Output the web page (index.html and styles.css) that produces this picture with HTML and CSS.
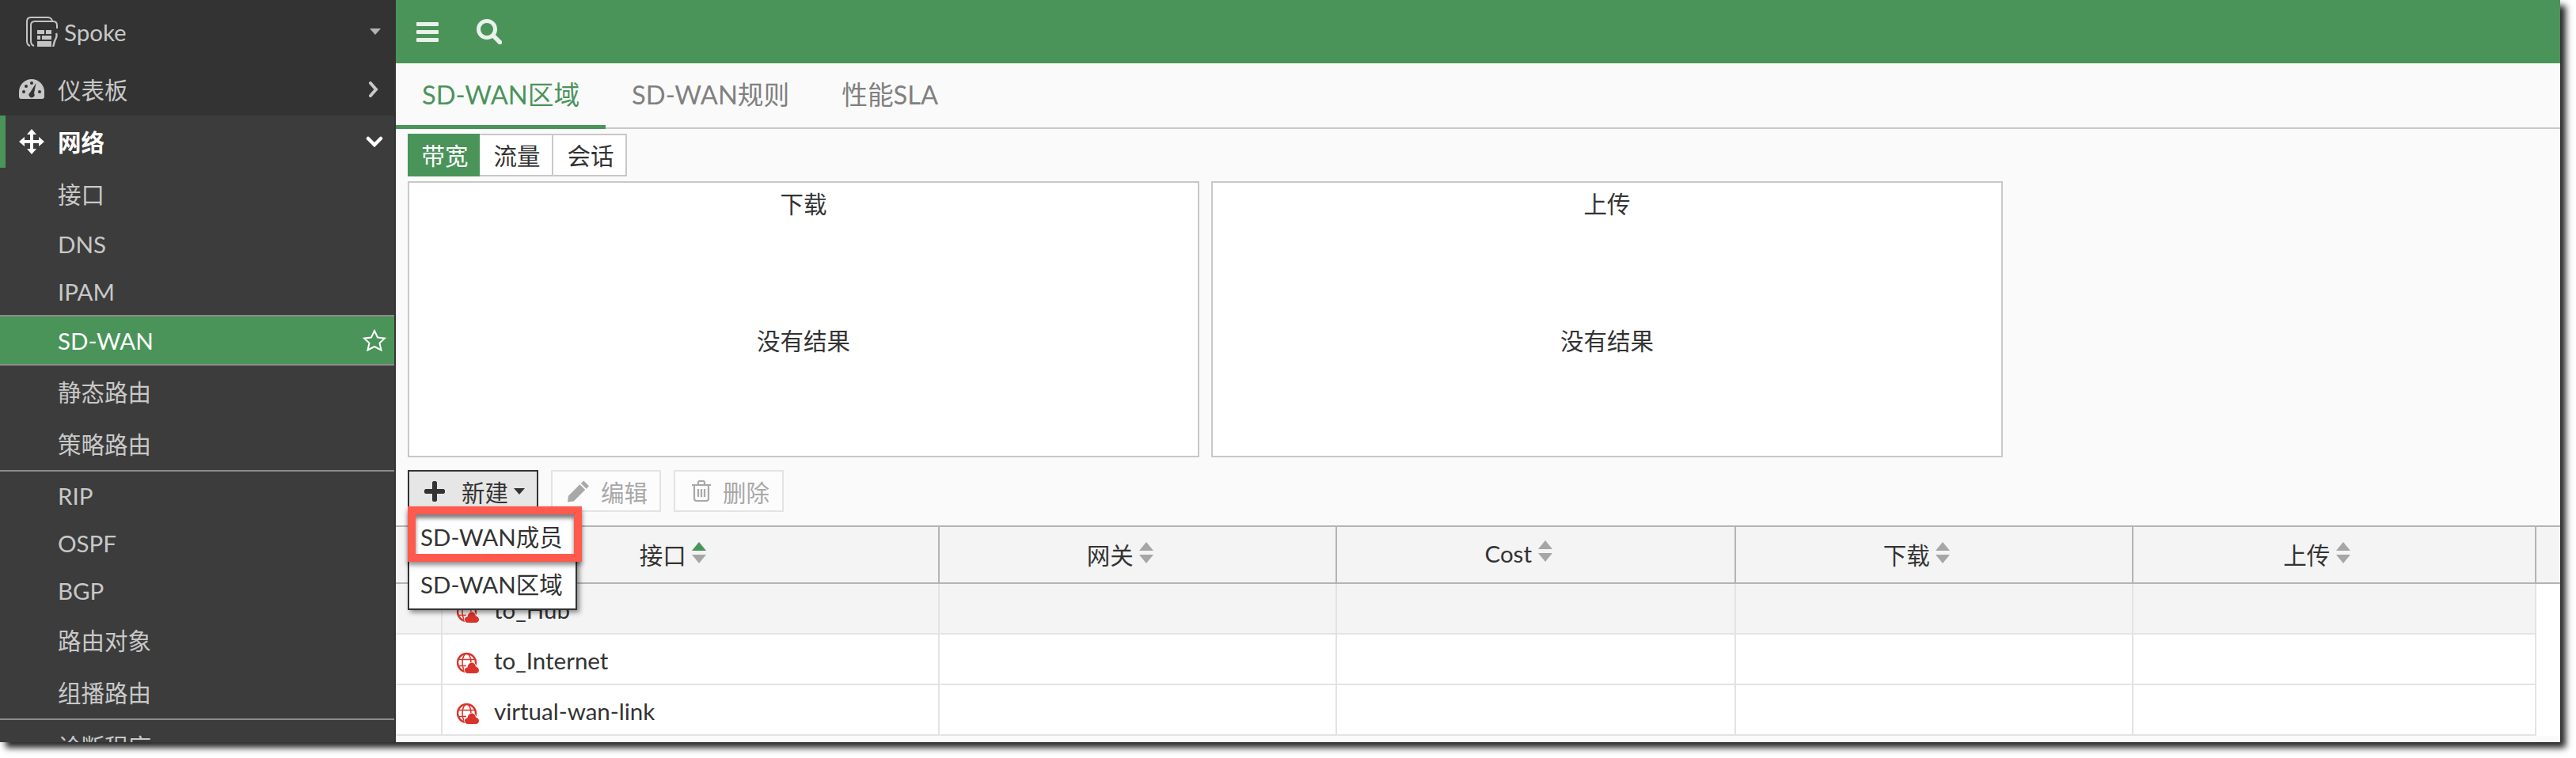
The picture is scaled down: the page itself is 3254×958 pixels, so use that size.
FILE: index.html
```html
<!DOCTYPE html>
<html lang="zh-CN">
  <head>
    <meta charset="UTF-8" />
    <title>SD-WAN</title>
    <link rel="stylesheet" href="styles.css">
  </head>
  <body>
    <svg class="sprites" width="0" height="0">
      <symbol id="sort-icon" viewBox="0 0 18 27">
        <path class="sort-up" d="M9 0 L18 11 H0 Z" />
        <path class="sort-down" d="M0 16 H18 L9 27 Z" />
      </symbol>
      <symbol id="wan-icon" viewBox="0 0 28 28">
        <circle cx="12.500" cy="13.500" r="11.500" fill="none" stroke="#d9342b" stroke-width="2.400" />
        <ellipse cx="12.500" cy="13.500" rx="5.500" ry="11.500" fill="none" stroke="#d9342b" stroke-width="1.500" />
        <path d="M2 9.500 H23 M2 17.500 H12" fill="none" stroke="#d9342b" stroke-width="1.500" />
        <path d="M14 27 C11.500 27 10 25 10 23 C10 21 11.500 19.500 13.500 19.500 C14 16 16 13.500 19 13.500 C22 13.500 23.500 16 24 18.500 C26.500 19 28 21 28 23 C28 25.500 26 27 24 27 Z" fill="#d9342b" stroke="#ffffff" stroke-width="1.500" paint-order="stroke" />
      </symbol>
    </svg>

    <div class="window">
      <nav class="sidebar">
        <div class="device">
          <svg class="device-logo" viewBox="0 0 40 38" fill="none" stroke="#c4c4c4" stroke-width="2">
            <path d="M5 37 C2 36 1 34 1 31 V6 C1 3 3 1 6 1 H27 C30 1 32 2 33 5" />
            <path d="M10 37 C7 36 6 34 6 31 V11 C6 8 8 6 11 6 H34 C37 6 39 8 39 11 V15" />
            <path d="M14 17 H23 V22 H14 Z M25 17 H32 V22 H25 Z M14 24 H18 V29 H14 Z M20 24 H32 V29 H20 Z M14 31 H32 V38 H14 Z" fill="#c4c4c4" stroke="none" />
            <path d="M38 21 C40 26 37 28 36 31 C35 34 35 36 34 38" stroke-width="2.400" />
          </svg>
          <span class="device-name">Spoke</span>
          <span class="caret caret-light"></span>
        </div>
        <a class="nav-top">
          <svg class="nav-icon" viewBox="0 0 32 26">
            <path fill="#c8c8c8" d="M16 0 A16 16 0 0 0 0 16 V22 C0 24 1 25 3 25 H29 C31 25 32 24 32 22 V16 A16 16 0 0 0 16 0 Z" />
            <g fill="#333">
              <circle cx="6" cy="16" r="2" />
              <circle cx="9" cy="9" r="2" />
              <circle cx="16" cy="5" r="2" />
              <circle cx="26" cy="16" r="2" />
              <path d="M21.500 5 L19 18 A3.500 3.500 0 1 1 14 17 Z" />
            </g>
          </svg>
          <span class="nav-label">仪表板</span>
          <svg class="nav-arrow" viewBox="0 0 13 20" fill="none" stroke="#c8c8c8" stroke-width="4" stroke-linecap="round">
            <path d="M3 2 L10 10 L3 18" />
          </svg>
        </a>
        <a class="nav-top nav-open">
          <svg class="nav-icon nav-icon-tall" viewBox="0 0 32 32" fill="#fff">
            <path d="M16 0 L22 7 H18 V14 H25 V10 L32 16 L25 22 V18 H18 V25 H22 L16 32 L10 25 H14 V18 H7 V22 L0 16 L7 10 V14 H14 V7 H10 Z" />
          </svg>
          <span class="nav-label">网络</span>
          <svg class="nav-arrow nav-arrow-down" viewBox="0 0 22 14" fill="none" stroke="#fff" stroke-width="4.500" stroke-linecap="round">
            <path d="M3 3 L11 11 L19 3" />
          </svg>
        </a>
        <a class="nav-sub nav-tall">接口</a>
        <a class="nav-sub">DNS</a>
        <a class="nav-sub">IPAM</a>
        <a class="nav-sub nav-current">
          SD-WAN
          <svg class="nav-star" viewBox="0 0 30 28" fill="none" stroke="#fff" stroke-width="2">
            <path d="M15 2 L19 10.500 L28 11.500 L21.500 17.500 L23.500 26.500 L15 22 L6.500 26.500 L8.500 17.500 L2 11.500 L11 10.500 Z" />
          </svg>
        </a>
        <a class="nav-sub nav-tall">静态路由</a>
        <a class="nav-sub nav-tall nav-last">策略路由</a>
        <a class="nav-sub">RIP</a>
        <a class="nav-sub">OSPF</a>
        <a class="nav-sub">BGP</a>
        <a class="nav-sub nav-tall">路由对象</a>
        <a class="nav-sub nav-tall nav-last">组播路由</a>
        <a class="nav-sub nav-tall">诊断程序</a>
      </nav>

      <main class="main">
        <header class="topbar">
          <svg class="menu-icon" viewBox="0 0 28 25" fill="#e9f1eb">
            <rect width="28" height="5" rx="1" />
            <rect y="10" width="28" height="5" rx="1" />
            <rect y="20" width="28" height="5" rx="1" />
          </svg>
          <svg class="search-icon" viewBox="0 0 32 32" fill="none" stroke="#e9f1eb">
            <circle cx="13" cy="13" r="10.500" stroke-width="5" />
            <path d="M21 21 L29.500 29.500" stroke-width="5.500" stroke-linecap="round" />
          </svg>
        </header>

        <div class="tabs">
          <a class="tab tab-active">SD-WAN区域</a>
          <a class="tab">SD-WAN规则</a>
          <a class="tab">性能SLA</a>
        </div>

        <div class="panel">
          <div class="switcher">
            <a class="switch switch-on">带宽</a>
            <a class="switch">流量</a>
            <a class="switch">会话</a>
          </div>
          <div class="charts">
            <section class="chart">
              <div class="chart-title">下载</div>
              <div class="chart-empty">没有结果</div>
            </section>
            <section class="chart">
              <div class="chart-title">上传</div>
              <div class="chart-empty">没有结果</div>
            </section>
          </div>

          <div class="toolbar">
            <button class="btn btn-new">
              <svg class="icon-plus" viewBox="0 0 26 26" fill="#333">
                <path d="M10 2 C10 1 11 0 12 0 H14 C15 0 16 1 16 2 V10 H24 C25 10 26 11 26 12 V14 C26 15 25 16 24 16 H16 V24 C16 25 15 26 14 26 H12 C11 26 10 25 10 24 V16 H2 C1 16 0 15 0 14 V12 C0 11 1 10 2 10 H10 Z" />
              </svg>
              <span class="btn-new-label">新建</span>
              <span class="caret"></span>
            </button>
            <button class="btn btn-off">
              <svg class="icon-edit" viewBox="0 0 28 28" fill="#a8a8a8">
                <path d="M21 0 L28 7 L24.500 10.500 L17.500 3.500 Z M16 5 L23 12 L8 27 L0 28 L1 20 Z" />
              </svg>
              编辑
            </button>
            <button class="btn btn-off btn-delete">
              <svg class="icon-trash" viewBox="0 0 24 27" fill="none" stroke="#a8a8a8" stroke-width="2.200">
                <path d="M0 6 H24 M8 5.500 V3 C8 2 9 1 10 1 H14 C15 1 16 2 16 3 V5.500 M3 6 V23 C3 25 4 26 6 26 H18 C20 26 21 25 21 23 V6 M8 11 V21 M12 11 V21 M16 11 V21" />
              </svg>
              删除
            </button>
            <div class="dropdown">
              <a class="dropdown-item">
                SD-WAN成员
                <span class="callout"></span>
              </a>
              <a class="dropdown-item">SD-WAN区域</a>
            </div>
          </div>
        </div>

        <table class="grid">
          <colgroup>
            <col class="col-check" />
            <col class="col-name" />
            <col class="col-gateway" />
            <col class="col-cost" />
            <col class="col-down" />
            <col class="col-up" />
            <col class="col-scroll" />
          </colgroup>
          <thead>
            <tr>
              <th></th>
              <th>接口 <svg class="sort sort-active"><use href="#sort-icon" /></svg></th>
              <th>网关 <svg class="sort"><use href="#sort-icon" /></svg></th>
              <th>Cost <svg class="sort"><use href="#sort-icon" /></svg></th>
              <th>下载 <svg class="sort"><use href="#sort-icon" /></svg></th>
              <th>上传 <svg class="sort"><use href="#sort-icon" /></svg></th>
              <th class="cell-scroll"></th>
            </tr>
          </thead>
          <tbody>
            <tr class="row-selected">
              <td></td>
              <td><svg class="wan"><use href="#wan-icon" /></svg>to_Hub</td>
              <td></td><td></td><td></td><td></td>
              <td class="cell-blank"></td>
            </tr>
            <tr>
              <td></td>
              <td><svg class="wan"><use href="#wan-icon" /></svg>to_Internet</td>
              <td></td><td></td><td></td><td></td>
              <td class="cell-blank"></td>
            </tr>
            <tr>
              <td></td>
              <td><svg class="wan"><use href="#wan-icon" /></svg>virtual-wan-link</td>
              <td></td><td></td><td></td><td></td>
              <td class="cell-blank"></td>
            </tr>
          </tbody>
        </table>
      </main>
    </div>
  </body>
</html>
```

FILE: styles.css
```css
* {
  box-sizing: border-box;
}
body {
  margin: 0;
  width: 3254px;
  height: 958px;
  overflow: hidden;
  background-color: #ffffff;
  font-family: "Lato", "Noto Sans CJK SC", sans-serif;
  font-size: 29.5px;
  color: #333333;
}
.sprites {
  position: absolute;
}
.window {
  display: flex;
  width: 3234px;
  height: 938px;
  background-color: #ffffff;
  box-shadow: 7px 7px 8px rgba(0, 0, 0, 0.85);
}

/* sidebar */
.sidebar {
  flex: none;
  width: 500px;
  height: 938px;
  overflow: hidden;
  background-color: #3c3c3c;
  border-right: 2px solid #333333;
  color: #c8c8c8;
}
.device {
  display: flex;
  align-items: center;
  height: 80px;
  padding: 0 17px 0 33px;
  background-color: #333333;
}
.device-logo {
  width: 40px;
  height: 38px;
}
.device-name {
  flex: 1;
  margin-left: 8px;
}
.nav-top {
  display: flex;
  align-items: center;
  height: 66px;
  padding: 0 17px 0 24px;
  background-color: #333333;
}
.nav-open {
  border-left: 7px solid #4a945a;
  padding-left: 17px;
  background-color: #3c3c3c;
  color: #ffffff;
  font-weight: bold;
}
.nav-icon {
  flex: none;
  width: 32px;
  height: 26px;
}
.nav-icon-tall {
  height: 32px;
}
.nav-label {
  flex: 1;
  margin-left: 17px;
  padding-bottom: 3px;
}
.nav-arrow {
  width: 13px;
  height: 20px;
  margin-right: 3px;
}
.nav-arrow-down {
  width: 22px;
  height: 14px;
  margin-right: -3px;
}
.nav-sub {
  display: flex;
  align-items: center;
  justify-content: space-between;
  height: 60px;
  padding: 0 10px 0 73px;
}
.nav-tall {
  height: 66px;
  padding-bottom: 3px;
}
.nav-current {
  height: 64px;
  border-top: 2px solid #8c8c8c;
  border-bottom: 2px solid #8c8c8c;
  background-color: #4a945a;
  color: #ffffff;
}
.nav-star {
  width: 30px;
  height: 28px;
}
.nav-last {
  height: 68px;
  border-bottom: 2px solid #8c8c8c;
}
.caret {
  display: inline-block;
  border-top: 8px solid #333333;
  border-left: 7.500px solid transparent;
  border-right: 7.500px solid transparent;
}
.caret-light {
  border-top-color: #b4b4b4;
}

/* main area */
.main {
  flex: 1;
  min-width: 0;
  background-color: #fafafa;
}
.topbar {
  display: flex;
  align-items: center;
  gap: 48px;
  height: 80px;
  padding: 0 26px;
  background-color: #4a945a;
}
.menu-icon {
  width: 28px;
  height: 25px;
}
.search-icon {
  width: 32px;
  height: 32px;
}
.tabs {
  display: flex;
  height: 83px;
  border-bottom: 2px solid #c8c8c8;
  font-size: 32.700px;
  color: #808080;
}
.tab {
  height: 83px;
  padding: 14px 33px 0;
}
.tab-active {
  border-bottom: 5px solid #4a945a;
  color: #4a945a;
}
.panel {
  padding: 6px 15px 17px;
}
.switcher {
  display: flex;
  width: 277px;
  height: 54px;
  margin-bottom: 6px;
}
.switch {
  flex: 1;
  display: flex;
  align-items: center;
  justify-content: center;
  padding: 0 0 3px 3px;
  background-color: #ffffff;
  border: 2px solid #c8c8c8;
  border-left-width: 0;
}
.switch-on {
  border: none;
  background-color: #4a945a;
  color: #ffffff;
}
.charts {
  display: flex;
  gap: 15px;
  margin-bottom: 16px;
}
.chart {
  display: flex;
  flex-direction: column;
  width: 1000px;
  height: 349px;
  background-color: #ffffff;
  border: 2px solid #c8c8c8;
  text-align: center;
}
.chart-title {
  height: 54px;
  line-height: 54px;
}
.chart-empty {
  flex: 1;
  display: flex;
  align-items: center;
  justify-content: center;
  padding-bottom: 3px;
}

/* toolbar */
.toolbar {
  position: relative;
  display: flex;
  gap: 16px;
  height: 53px;
}
.btn {
  display: flex;
  align-items: center;
  width: 139px;
  padding: 0 0 0 19px;
  border: 2px solid #e3e3e3;
  background-color: #fcfcfc;
  font: inherit;
  color: #a8a8a8;
}
.btn-new {
  width: 165px;
  border-color: #333333;
  background-color: #e6e6e6;
  color: #333333;
}
.btn-new-label {
  margin: 0 7px 0 21px;
}
.btn-delete {
  padding-left: 21px;
}
.icon-plus {
  width: 26px;
  height: 26px;
}
.icon-edit {
  width: 27px;
  height: 28px;
  margin-right: 15px;
}
.icon-trash {
  width: 24px;
  height: 27px;
  margin-right: 15px;
}
.dropdown {
  position: absolute;
  left: 0;
  top: 51px;
  width: 214px;
  padding-top: 2px;
  border: 2px solid #333333;
  background-color: #ffffff;
  box-shadow: 3px 3px 6px rgba(0, 0, 0, 0.45);
}
.dropdown-item {
  position: relative;
  display: flex;
  align-items: center;
  height: 60px;
  padding: 0 14px 4px;
}
.callout {
  position: absolute;
  left: -2px;
  top: -9px;
  width: 220px;
  height: 70px;
  border: 10px solid #ff5a4d;
  box-shadow: 0 4px 6px rgba(0, 0, 0, 0.45), inset 0 5px 5px rgba(0, 0, 0, 0.5);
}

/* table */
.grid {
  width: 2734px;
  table-layout: fixed;
  border-collapse: separate;
  border-spacing: 0;
}
.col-check { width: 59px; }
.col-name { width: 628px; }
.col-gateway { width: 502px; }
.col-cost { width: 504px; }
.col-down { width: 502px; }
.col-up { width: 509px; }
.col-scroll { width: 30px; }
.grid th {
  height: 74px;
  padding: 0 44px 3px 0;
  background-color: #f4f4f4;
  border-top: 2px solid #b4b4b4;
  border-bottom: 2px solid #b4b4b4;
  border-right: 2px solid #b4b4b4;
  font-weight: normal;
}
.grid th.cell-scroll {
  border-right: none;
}
.grid td {
  height: 64px;
  padding: 2px 18px 0;
  background-color: #ffffff;
  border-bottom: 2px solid #e3e3e3;
  border-right: 2px solid #e3e3e3;
  white-space: nowrap;
}
.grid .row-selected td {
  background-color: #f4f4f4;
}
.grid td.cell-blank {
  border: none;
  background-color: #ffffff;
}
.sort {
  --sort-up: #a6a6a6;
  width: 18px;
  height: 27px;
  vertical-align: 1px;
}
.sort-active {
  --sort-up: #4a945a;
}
.sort-up {
  fill: var(--sort-up);
}
.sort-down {
  fill: #a6a6a6;
}
.wan {
  width: 28px;
  height: 28px;
  margin-right: 19px;
  vertical-align: -6px;
}
```
